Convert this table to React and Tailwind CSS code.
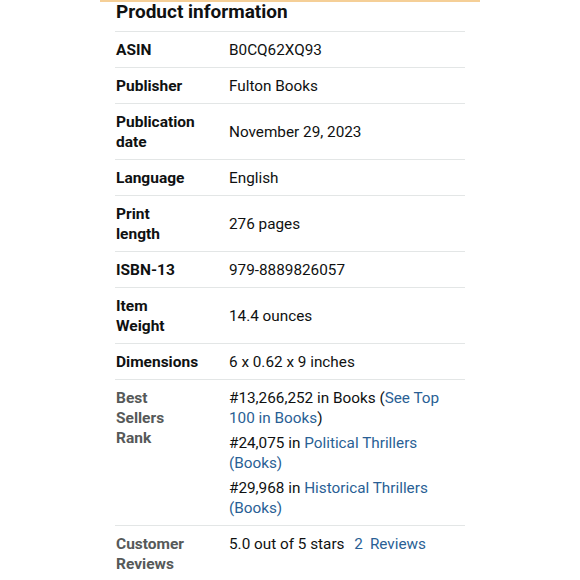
const rows = [
  { label: "ASIN", value: "B0CQ62XQ93" },
  { label: "Publisher", value: "Fulton Books" },
  { label: "Publication date", value: "November 29, 2023" },
  { label: "Language", value: "English" },
  { label: "Print length", value: "276 pages" },
  { label: "ISBN-13", value: "979-8889826057" },
  { label: "Item Weight", value: "14.4 ounces" },
  { label: "Dimensions", value: "6 x 0.62 x 9 inches" },
];

const Link = ({ children }) => <span className="text-[#2a5f95]">{children}</span>;

const App = () => {
  return (
    <div className="bg-white min-h-[580px] text-[#0f1111]" style={{ fontFamily: "Roboto, 'Noto Sans', sans-serif" }}>
      <div className="ml-[100px] w-[380px] border-t-2 border-[#f5cf97]">
        <div className="pl-[15px] pr-[15px]">
          <h2 className="text-[19px] font-bold leading-[20px] pl-[1px] pb-[9px]">Product information</h2>

          {rows.map((row, index) => (
            <div key={index} className="flex items-center border-t border-[#e3e6e6] pt-[8px] pb-[7px] leading-[20px]">
              <div className="w-[114px] shrink-0 pl-[1px] pr-[34px] font-bold text-[15.5px]">{row.label}</div>
              <div className="flex-1 text-[15.3px]">{row.value}</div>
            </div>
          ))}

          {/* Best Sellers Rank */}
          <div className="flex border-t border-[#e3e6e6] pt-[8px] pb-[7px] leading-[20px]">
            <div className="w-[114px] shrink-0 pl-[1px] pr-[34px] font-bold text-[15.5px] text-[#565959]">Best Sellers Rank</div>
            <div className="flex-1 pr-[20px] flex flex-col gap-[5px] text-[15.3px]">
              <div>
                #13,266,252 in Books (<Link>See Top 100 in Books</Link>)
              </div>
              <div>
                #24,075 in <Link>Political Thrillers (Books)</Link>
              </div>
              <div>
                #29,968 in <Link>Historical Thrillers (Books)</Link>
              </div>
            </div>
          </div>

          {/* Customer Reviews */}
          <div className="flex border-t border-[#e3e6e6] pt-[8px] pb-[7px] leading-[20px]">
            <div className="w-[114px] shrink-0 pl-[1px] pr-[34px] font-bold text-[15.5px] text-[#565959]">Customer Reviews</div>
            <div className="flex-1 text-[15.3px]">
              5.0 out of 5 stars <span className="ml-[6px]"><Link>2</Link></span>
              <span className="ml-[7px]"><Link>Reviews</Link></span>
            </div>
          </div>
        </div>
      </div>
    </div>
  );
};

export default App;
